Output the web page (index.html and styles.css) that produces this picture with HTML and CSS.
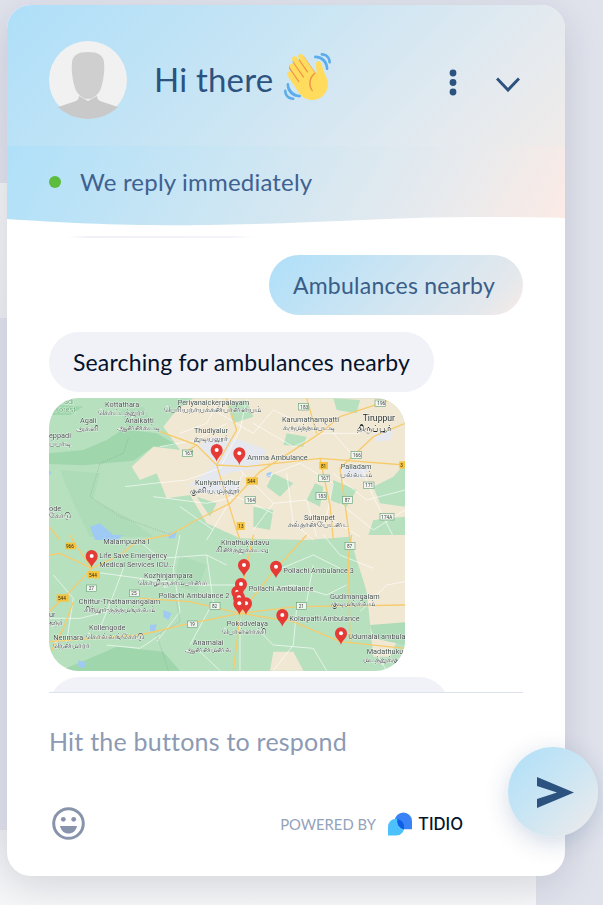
FILE: index.html
```html
<!DOCTYPE html>
<html lang="en">
<head>
<meta charset="utf-8">
<title>Chat</title>
<link rel="stylesheet" href="styles.css">
</head>
<body>
<main class="card">
  <header class="head">
    <div class="top">
      <svg class="avatar" viewBox="0 0 78 78" aria-hidden="true">
        <circle class="av-bg" cx="39" cy="39" r="39"/>
        <path class="av-sh" d="M9 66 27 60C29 59 30 57 30 55L39 60 48 55C48 57 49 59 51 60L69 66C62 73 51 78 39 78S16 73 9 66Z"/>
        <path class="av-fg" d="M39 11C29 11 24 14 23 21 22 30 24 41 26 47 28 53 33 58 39 58S50 53 52 47C54 41 56 30 55 21 54 14 49 11 39 11Z"/>
      </svg>
      <h1 class="greet">Hi there</h1>
      <svg class="wave" viewBox="0 0 36 36" aria-hidden="true">
        <path class="w-o" d="M4.861 9.147c.94-.657 2.357-.531 3.201.166l-.968-1.407c-.779-1.111-.5-2.313.612-3.093 1.112-.777 4.263 1.312 4.263 1.312-.786-1.122-.639-2.544.483-3.331 1.122-.784 2.67-.513 3.456.611l10.42 14.72L25 31l-11.083-4.042L4.25 12.625c-.793-1.129-.519-2.686.611-3.478z"/>
        <path class="w-y" d="M2.695 17.336s-1.132-1.65.519-2.781c1.649-1.131 2.78.518 2.78.518l5.251 7.658c.181-.302.379-.6.6-.894L4.557 11.21s-1.131-1.649.519-2.78c1.649-1.131 2.78.518 2.78.518l6.855 9.997c.255-.208.516-.417.785-.622L6.549 5.732s-1.131-1.649.519-2.78c1.649-1.131 2.78.518 2.78.518l7.947 11.589c.292-.179.581-.334.871-.498L11.238 3.937s-1.131-1.649.518-2.78c1.649-1.131 2.78.518 2.78.518l7.854 11.454 1.194 1.742c-4.948 3.394-5.419 9.779-2.592 13.902.565.825 1.39.26 1.39.26-3.393-4.949-2.357-10.51 2.592-13.903L24.515 8.913s-.545-1.924 1.378-2.47c1.924-.545 2.47 1.379 2.47 1.379l1.685 5.004c.668 1.984 1.379 3.961 2.32 5.831 2.657 5.28 1.07 11.842-3.94 15.279-5.465 3.747-12.936 2.354-16.684-3.11L2.695 17.336z"/>
        <path class="w-b" d="M12 32.042C8 32.042 3.958 28 3.958 24c0-.553-.405-1-.958-1s-1.042.447-1.042 1C1.958 30 6 34.042 12 34.042c.553 0 1-.489 1-1.042s-.447-.958-1-.958z"/>
        <path class="w-b" d="M7 34c-3 0-5-2-5-5 0-.553-.447-1-1-1s-1 .447-1 1c0 4 3 7 7 7 .553 0 1-.447 1-1s-.447-1-1-1zM24 2c-.552 0-1 .448-1 1s.448 1 1 1c4 0 8 3.589 8 8 0 .552.448 1 1 1s1-.448 1-1c0-5.514-4-10-10-10z"/>
        <path class="w-b" d="M29 .042c-.552 0-1 .406-1 .958s.448 1.042 1 1.042c3 0 4.958 2.225 4.958 4.958 0 .552.489 1 1.042 1s.958-.448.958-1C35.958 3.163 33 .042 29 .042z"/>
      </svg>
      <svg class="dots" viewBox="0 0 8 27" aria-hidden="true">
        <circle cx="4" cy="4" r="3.4"/><circle cx="4" cy="13.5" r="3.4"/><circle cx="4" cy="23" r="3.4"/>
      </svg>
      <svg class="chev" viewBox="0 0 24 15" aria-hidden="true"><path d="M1 1.500 12 13 23 1.500"/></svg>
    </div>
    <div class="status">
      <span class="online"></span>
      <span class="reply">We reply immediately</span>
      <svg class="wavy" viewBox="0 0 558 12" preserveAspectRatio="none" aria-hidden="true">
        <path d="M0 4C60 8 120 11 200 10 300 9 380 2 470 2 510 2 540 2.500 558 3V12H0z"/>
      </svg>
    </div>
  </header>

  <section class="messages">
    <div class="prev"></div>
    <div class="bubble mine">Ambulances nearby</div>
    <div class="bubble theirs">Searching for ambulances nearby</div>
    <svg class="map" viewBox="0 0 356 273" role="img" aria-label="Map of ambulances">
      <defs>
        <g id="pin"><path class="pin" d="M0 0C-3-14-18-19-18-35A18 18 0 1 1 18-35C18-19 3-14 0 0Z"/><circle class="pin-dot" cy="-35" r="6"/></g>
      </defs>
      <rect class="m-green" width="356" height="273"/>
      <g transform="translate(-9 -8) scale(.33333)">
        <path class="m-dark" d="M27 190 130 180 200 150 250 118 350 130 410 165 340 170 280 212 130 226 27 222zM27 60 60 45 130 50 90 75 27 75z"/>
        <path class="m-mid" d="M60 240 180 250 160 330 260 380 340 440 150 440 100 340zM240 60 310 50 340 100 260 110z"/>
        <path class="m-beige" d="M275 230 340 170 420 180 370 110 410 60 460 25H1095V700L1050 800H1000L980 600 950 510 930 440 800 450 600 445 500 400 450 315 380 325 350 250 300 270z"/>
        <path class="m-green" d="M825 280 850 290 840 350 800 330zM880 270 950 300 920 350 870 330zM1000 290 1060 260 1095 220V350L1020 340zM700 250 760 280 720 320 680 290zM560 40 620 30 640 80 580 100zM880 25 960 30 950 70 890 60zM740 130 800 140 790 170 730 165zM470 320 530 340 510 380zM640 350 700 360 690 420 640 410zM1000 390 1095 380V450H980z"/>
        <path class="m-urban" d="M470 170 520 140 600 150 680 180 650 235 560 250 520 280 440 290 520 230 500 190zM1000 130 1060 120 1050 150 1010 155zM900 230 990 225 970 265 920 265zM470 270 600 280 590 310 470 310z"/>
        <path class="m-water" d="M150 410 180 400 220 435 215 450H165zM385 430 410 425 405 445 385 445zM27 240 35 250 27 255zM680 250 695 245 690 262 680 262z"/>
        <g class="m-white">
          <path d="M255 290 340 280 440 270 540 235 600 120 620 25M600 240 700 340 800 330 830 440M740 250 760 400 820 450M340 320 500 340 590 320 700 370M560 100 470 150 360 170M880 250 980 330 1095 300M610 250 560 350 500 450M880 130 960 220 1000 320M640 100 760 170 850 130 960 130M680 260 780 220 880 280 860 380 960 440M520 60 640 130 700 60 780 100M1000 320 1060 440M700 340 640 420M900 340 1000 420 1095 360M420 350 520 420M540 25 500 100 420 130"/>
        </g>
        <path class="m-trail" d="M265 145 250 190 180 220 150 320 240 380 380 430"/>
        <g class="m-road">
          <path d="M27 410 60 450M380 440 470 390 570 340 635 270 660 245 840 130 900 80 1095 15M360 125 470 165 530 225 620 230 840 205 1095 225M560 25 590 120 530 225 590 420 600 450M840 205 870 345 880 450M1095 100 1000 140 900 235 930 450M800 25 830 130M430 190 470 165"/>
        </g>
        <g class="m-shield">
          <rect x="775" y="40" width="30" height="20"/><text x="781" y="56">183</text>
          <rect x="1005" y="30" width="32" height="20"/><text x="1012" y="46">196</text>
          <rect x="428" y="180" width="30" height="20"/><text x="434" y="196">167</text>
          <rect x="933" y="185" width="32" height="20"/><text x="939" y="201">166</text>
          <rect x="615" y="320" width="32" height="20"/><text x="621" y="336">164</text>
          <rect x="836" y="255" width="32" height="20"/><text x="842" y="271">167</text>
          <rect x="828" y="308" width="32" height="20"/><text x="834" y="324">183</text>
          <rect x="908" y="320" width="30" height="20"/><text x="914" y="336">87</text>
          <rect x="970" y="276" width="32" height="20"/><text x="976" y="292">171</text>
          <rect x="1020" y="370" width="42" height="20"/><text x="1024" y="386">174A</text>
        </g>
        <g class="m-badge">
          <rect x="618" y="262" width="36" height="22"/><text x="622" y="279">544</text>
          <rect x="838" y="216" width="26" height="22"/><text x="843" y="233">81</text>
          <rect x="590" y="396" width="24" height="24"/><text x="595" y="414">13</text>
          <rect x="1078" y="214" width="17" height="22"/><text x="1081" y="231">3</text>
        </g>
        <g class="m-label">
          <text x="195" y="52">Kottathara</text>
          <text x="175" y="74" class="ta">கொட்டத்துரா</text>
          <text x="120" y="100">Agali</text>
          <text x="108" y="123" class="ta">அகளி</text>
          <text x="255" y="98">Anaikatti</text>
          <text x="232" y="121" class="ta">ஆனைகட்டி</text>
          <text x="413" y="44">Periyanaickerpalayam</text>
          <text x="372" y="66" class="ta">பெரியநாயக்கன்பாளையம்</text>
          <text x="27" y="143">eppadi</text>
          <text x="27" y="167" class="ta">ப்பாடி</text>
          <text x="462" y="128">Thudiyalur</text>
          <text x="462" y="153" class="ta">துடியலூர்</text>
          <text x="726" y="97">Karumathampatti</text>
          <text x="728" y="120" class="ta">கருமத்தம்பட்டி</text>
          <text x="622" y="209">Amma Ambulance</text>
          <text x="465" y="285">Kuniyamuthur</text>
          <text x="450" y="308" class="ta">குனியமுத்தூர்</text>
          <text x="902" y="238">Palladam</text>
          <text x="900" y="260" class="ta">பல்லடம்</text>
          <text x="792" y="389">Sultanpet</text>
          <text x="745" y="412" class="ta">சுல்தான்பேட்டை</text>
          <text x="27" y="362">ode</text>
          <text x="27" y="384" class="ta">கோடு</text>
          <text x="72" y="42" class="forest">adi</text>
          <text x="45" y="67" class="forest">Forest</text>
          <text x="968" y="94" class="big">Tiruppur</text>
          <text x="952" y="122" class="big ta">திருப்பூர்</text>
        </g>
        <use href="#pin" x="530" y="215"/>
        <use href="#pin" x="598" y="225"/>
      </g>
      <g transform="translate(-9 137) scale(.33333)">
        <path class="m-beige" d="M960 0H1095V250L1010 270 985 190 950 60zM700 350 760 350 790 407H690z"/>
        <path class="m-dark" d="M60 407 150 370 230 335 370 350 420 407z"/>
        <path class="m-mid" d="M420 60 500 90 470 170 400 150zM990 270 1095 262V330L1000 310z"/>
        <path class="m-water" d="M180 0H250L225 20 195 15zM115 375 140 385 130 400 115 395zM330 270 350 268 345 290 330 288zM370 225 395 235 385 255 370 245z"/>
        <g class="m-white">
          <path d="M155 110 300 130 450 150 600 150M420 0 400 100 420 230 350 320M600 250 600 407M250 100 220 180 180 280M500 60 520 200 450 330M700 110 820 60 900 100M770 220 760 330 700 407M850 0 900 60 1000 100M40 120 100 190 80 320M300 20 360 70 500 60 560 90M640 170 760 150 860 180 920 150M650 280 700 330 820 340 860 407M200 330 300 340 360 300M480 350 540 407M1000 340 1040 407M30 250 120 250 200 230M820 90 800 200M960 230 1040 150 1095 140"/>
        </g>
        <path class="m-trail" d="M410 200 420 260 350 300 370 360 385 407"/>
        <g class="m-road">
          <path d="M155 100 60 55 27 60M155 100 100 20 90 0M155 100 90 170 27 230M155 100 240 60 290 20 380 0M27 320 300 300 450 265 600 235 770 215 1095 210M600 235 450 200 300 190M600 235 760 260 900 320 1095 340M600 235 610 140 640 0M600 235 700 110 800 0M930 320 925 60 935 0M600 235 590 330 580 407M27 360 70 280 100 200"/>
        </g>
        <g class="m-shield">
          <rect x="140" y="150" width="30" height="20"/><text x="146" y="166">27</text>
          <rect x="268" y="165" width="30" height="20"/><text x="274" y="181">25</text>
          <rect x="510" y="203" width="30" height="20"/><text x="516" y="219">82</text>
          <rect x="770" y="203" width="30" height="20"/><text x="776" y="219">21</text>
          <rect x="915" y="23" width="30" height="20"/><text x="921" y="39">87</text>
          <rect x="443" y="258" width="30" height="20"/><text x="449" y="274">19</text>
        </g>
        <g class="m-badge">
          <rect x="143" y="108" width="36" height="22"/><text x="147" y="125">544</text>
          <rect x="76" y="23" width="32" height="20"/><text x="78" y="39">966</text>
          <rect x="50" y="178" width="36" height="22"/><text x="54" y="195">544</text>
        </g>
        <g class="m-label">
          <text x="190" y="27">Malampuzha I</text>
          <text x="543" y="30">Kinathukadavu</text>
          <text x="528" y="52" class="ta">கிணத்துக்கடவு</text>
          <text x="178" y="70">Life Save Emergency</text>
          <text x="178" y="96">Medical Services ICU...</text>
          <text x="730" y="113">Pollachi Ambulance 3</text>
          <text x="312" y="128">Kozhinjampara</text>
          <text x="295" y="151" class="ta">கொழிஞ்சாம்பாறை</text>
          <text x="626" y="168">Pollachi Ambulance</text>
          <text x="356" y="188">Pollachi Ambulance 2</text>
          <text x="116" y="208">Chittur-Thathamangalam</text>
          <text x="132" y="231" class="ta">சிற்றூர்-தத்தமங்கலம்</text>
          <text x="870" y="191">Gudimangalam</text>
          <text x="872" y="214" class="ta">குடிமங்கலம்</text>
          <text x="748" y="257">Kolarpatti Ambulance</text>
          <text x="560" y="274">Pokodvelaya</text>
          <text x="545" y="297" class="ta">பொள்ளாச்சி</text>
          <text x="147" y="286">Kollengode</text>
          <text x="137" y="312" class="ta">கொல்லங்கோடு</text>
          <text x="40" y="314">Nenmara</text>
          <text x="40" y="338" class="ta">நென்மாரா</text>
          <text x="925" y="312">Udumalai ambula</text>
          <text x="458" y="330">Anamalai</text>
          <text x="436" y="352" class="ta">ஆனைமலை</text>
          <text x="980" y="358">Madathukul</text>
          <text x="970" y="381" class="ta">மடத்துக்குளம்</text>
          <text x="27" y="246">ur</text>
          <text x="27" y="269" class="ta">ளூர்</text>
        </g>
        <use href="#pin" x="155" y="98"/>
        <use href="#pin" x="612" y="125"/>
        <use href="#pin" x="708" y="130"/>
        <use href="#pin" x="592" y="205"/>
        <use href="#pin" x="603" y="182"/>
        <use href="#pin" x="597" y="222"/>
        <use href="#pin" x="618" y="240"/>
        <use href="#pin" x="598" y="240"/>
        <use href="#pin" x="727" y="275"/>
        <use href="#pin" x="903" y="330"/>
      </g>
    </svg>
    <div class="bubble theirs cut"></div>
  </section>

  <footer class="composer">
    <p class="placeholder">Hit the buttons to respond</p>
    <div class="tools">
      <svg class="smile" viewBox="0 0 33 33" aria-hidden="true">
        <circle class="s-ring" cx="16.5" cy="16.5" r="14.8"/>
        <circle class="s-fill" cx="11.3" cy="12.3" r="2.4"/>
        <circle class="s-fill" cx="21.7" cy="12.3" r="2.4"/>
        <path class="s-fill" d="M8 19H25C24 24 20.500 26.500 16.500 26.500S9 24 8 19Z"/>
      </svg>
      <div class="brand">
        <span class="powered">POWERED BY</span>
        <svg class="logo" viewBox="0 0 25 24" aria-hidden="true">
          <path class="l-blue" d="M7 9A9 9 0 0 1 25 9V17.500H16A9 9 0 0 1 7 9Z"/>
          <path class="l-cyan" d="M0 15A8.500 8.500 0 0 1 17 15A8.500 8.500 0 0 1 8.500 24H0Z"/>
          <path class="l-mid" d="M9.800 6.600A8.500 8.500 0 0 1 17 15C17 15.900 16.900 16.700 16.600 17.500H16A9 9 0 0 1 9.800 6.600Z"/>
        </svg>
        <span class="tidio">TIDIO</span>
      </div>
    </div>
  </footer>

  <button class="send" type="button" aria-label="Send">
    <svg viewBox="0 0 37 31" aria-hidden="true"><path d="M0 0 37 15.500 0 31V22L20 15.500 0 9Z"/></svg>
  </button>
</main>
</body>
</html>
```
FILE: styles.css
```css
* { box-sizing: border-box; }
html, body { margin: 0; height: 905px; overflow: hidden; }
body {
  font-family: "Lato", "Noto Sans", sans-serif;
  background:
    linear-gradient(#f3f4f6, #eeeff3) 0 183px / 536px 135px no-repeat,
    linear-gradient(#eeeff2, #f6f7f8) 0 830px / 536px 75px no-repeat,
    #e0e3ec;
  padding: 5px 0 0 7px;
}
.card {
  position: relative;
  width: 558px;
  height: 871px;
  background: #fff;
  border-radius: 24px;
  display: flex;
  flex-direction: column;
  box-shadow: 0 10px 40px rgba(0, 18, 46, .13);
}
.head {
  border-radius: 24px 24px 0 0;
  overflow: hidden;
  color: #2c5380;
}
.top {
  height: 141px;
  padding: 36px 45px 0 42px;
  display: flex;
  align-items: flex-start;
  background: linear-gradient(135deg, #aedff9 0%, #c9e5f4 45%, #e4eaef 80%, #f0ebe9 100%);
}
.avatar { width: 78px; height: 78px; flex: none; }
.av-bg { fill: #f1f1f1; }
.av-fg { fill: #cfcfcf; }
.av-sh { fill: #c9c9c9; }
.greet {
  margin: 14px 0 0 27px;
  font-size: 33px;
  line-height: 48px;
  font-weight: 400;
  letter-spacing: .2px;
}
.wave { width: 47px; height: 47px; margin: 12px 0 0 11px; flex: none; }
.w-o { fill: #ef9645; }
.w-y { fill: #ffdc5d; }
.w-b { fill: #5dadec; }
.dots { width: 8px; height: 27px; margin: 28px 0 0 auto; color: #2c5380; fill: currentColor; }
.chev { width: 24px; height: 15px; margin: 36px 0 0 39px; fill: none; stroke: #2c5380; stroke-width: 3; }
.status {
  position: relative;
  height: 81px;
  padding: 21px 0 0 42px;
  display: flex;
  align-items: flex-start;
  gap: 19px;
  background: linear-gradient(120deg, #afe0f9 0%, #c8e5f4 35%, #e6eaee 75%, #fcebe5 100%);
}
.online { width: 12px; height: 12px; margin-top: 9px; border-radius: 50%; background: #5dbb3d; flex: none; }
.reply { font-size: 24px; line-height: 30px; font-weight: 400; color: #3f6190; letter-spacing: .2px; }
.wavy { position: absolute; left: 0; right: 0; bottom: 0; width: 558px; height: 12px; fill: #fff; }
.messages {
  height: 466px;
  margin: 0 42px;
  display: flex;
  flex-direction: column;
  overflow: hidden;
  border-bottom: 1px solid #dde2ee;
}
.prev {
  flex: none;
  height: 2px;
  margin: 9px 0 17px 18px;
  width: 187px;
  background: linear-gradient(90deg, rgba(240,242,247,0), #eff1f7 12%, #f3f4f9 88%, rgba(240,242,247,0));
}
.bubble {
  flex: none;
  height: 60px;
  padding: 0 24px;
  border-radius: 30px;
  font-size: 23px;
  line-height: 60px;
  white-space: nowrap;
  letter-spacing: .16px;
}
.mine {
  align-self: flex-end;
  padding-right: 28px;
  color: #3a5d88;
  letter-spacing: .25px;
  background: linear-gradient(135deg, #aedff9 0%, #cfe5f2 50%, #e4e8ec 85%, #f8ebe6 100%);
  margin-bottom: 17px;
}
.theirs { align-self: flex-start; background: #f0f2f7; color: #06132b; margin-bottom: 6px; }
.cut { width: 400px; margin-bottom: 0; }
.map { flex: none; width: 356px; height: 273px; border-radius: 30px; margin-bottom: 6px; filter: blur(.4px); }
.m-green { fill: #b7e0bf; }
.m-dark { fill: #9fd6ac; }
.m-mid { fill: #aedcb8; }
.m-beige { fill: #f1e8d4; }
.m-urban { fill: #e6e8ef; }
.m-water { fill: #9fcaf3; }
.m-white path { fill: none; stroke: #fff; stroke-width: 2.2; stroke-linejoin: round; opacity: .85; }
.m-road path { fill: none; stroke: #f7cb6c; stroke-width: 4; stroke-linejoin: round; }
.m-trail { fill: none; stroke: #8d9a90; stroke-width: 1.500; stroke-dasharray: 3 4; }
.m-shield rect { fill: #f2f5ef; stroke: #6da67c; stroke-width: 2; }
.m-shield text, .m-badge text { font-family: "Roboto", sans-serif; font-size: 14px; fill: #3a4541; }
.m-badge rect { fill: #f5c33d; }
.m-badge text { fill: #2b2a1c; }
.m-label text {
  font-family: "Roboto", "Noto Sans", sans-serif;
  font-size: 22px;
  fill: #43504a;
  stroke: #fff;
  stroke-width: 2px;
  paint-order: stroke;
}
.m-label .ta { font-size: 24px; fill: #3a4541; }
.m-label .big { font-size: 26px; fill: #1f2622; }
.m-label .forest { fill: #5aa36a; font-size: 22px; }
.pin { fill: #e53a35; }
.pin-dot { fill: #fff; }
.composer { flex: 1; padding: 33px 42px 0; display: flex; flex-direction: column; }
.placeholder { margin: 0; font-size: 25px; line-height: 30px; color: #8c9ab4; letter-spacing: .22px; font-weight: 400; }
.tools { margin-top: 51px; display: flex; align-items: center; justify-content: space-between; padding: 0 60px 0 3px; }
.smile { width: 33px; height: 33px; flex: none; }
.s-ring { fill: none; stroke: #8894ab; stroke-width: 3; }
.s-fill { fill: #8894ab; }
.brand { display: flex; align-items: center; }
.powered { font-size: 14.800px; color: #95a2b9; font-weight: 400; }
.logo { width: 24px; height: 24px; margin-left: 12px; flex: none; }
.l-blue { fill: #3a83f6; }
.l-cyan { fill: #4cc1fb; }
.l-mid { fill: #0e5ee8; }
.tidio { margin-left: 6px; font-family: "Inter", sans-serif; font-size: 16.800px; font-weight: 500; color: #06132b; }
.send {
  position: absolute;
  left: 501px;
  top: 742px;
  width: 90px;
  height: 90px;
  padding: 0;
  border: 0;
  border-radius: 50%;
  display: flex;
  align-items: center;
  justify-content: center;
  background: linear-gradient(135deg, #afdff8 0%, #c8e5f4 45%, #f0ebea 100%);
  box-shadow: 0 6px 24px rgba(0, 50, 110, .18);
}
.send svg { width: 37px; height: 31px; fill: #2c5380; margin-left: 5px; }
```
